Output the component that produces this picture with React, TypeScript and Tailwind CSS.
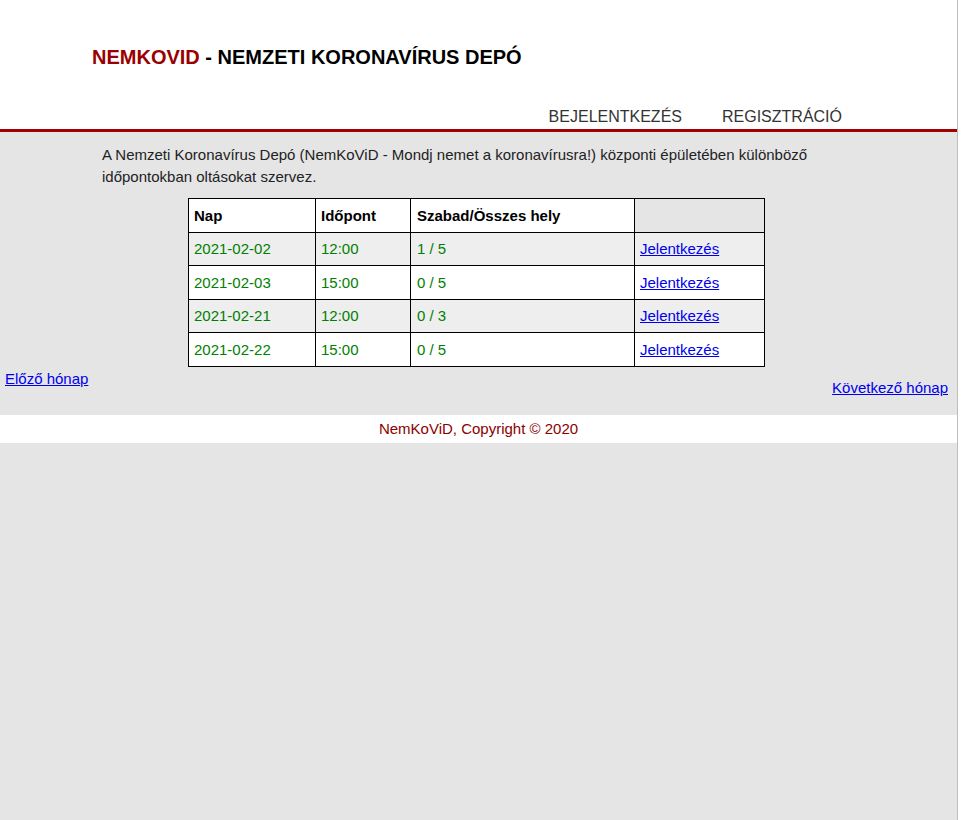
const rows = [
  { day: "2021-02-02", time: "12:00", free: "1 / 5" },
  { day: "2021-02-03", time: "15:00", free: "0 / 5" },
  { day: "2021-02-21", time: "12:00", free: "0 / 3" },
  { day: "2021-02-22", time: "15:00", free: "0 / 5" },
]

export default function App() {
  return (
    <div className="flex min-h-[820px] bg-white font-['Liberation_Sans',Arial,sans-serif]">
      <div className="w-[958px] border-r border-[#bdbdbd] bg-[#e5e5e5]">
        <header className="border-b-[3px] border-[#a00000] bg-white">
          <div className="ml-[92px] w-[770px]">
            <h1 className="pt-[44px] text-[20px] font-bold leading-[26px] text-black">
              <span className="text-[#990000]">NEMKOVID</span> - NEMZETI KORONAVÍRUS DEPÓ
            </h1>
            <nav className="mt-[36px] flex justify-end pb-[1px] text-[16px] leading-[22px] text-[#333]">
              <a className="px-[20px]">BEJELENTKEZÉS</a>
              <a className="px-[20px]">REGISZTRÁCIÓ</a>
            </nav>
          </div>
        </header>

        <main className="pb-[6px]">
          <div className="ml-[92px] w-[770px] px-[10px] pt-[12px]">
            <p className="text-[15px] leading-[22px] text-[#222]">
              A Nemzeti Koronavírus Depó (NemKoViD - Mondj nemet a koronavírusra!) központi épületében különböző
              időpontokban oltásokat szervez.
            </p>
            <table className="ml-[86px] mt-[10px] w-[577px] border-collapse text-[15px] leading-[20px]">
              <thead>
                <tr className="h-[34px]">
                  <th className="w-[127px] border border-black bg-white px-[5px] text-left font-bold">Nap</th>
                  <th className="w-[95px] border border-black bg-white px-[5px] text-left font-bold">Időpont</th>
                  <th className="w-[224px] border border-black bg-white px-[6px] text-left font-bold">Szabad/Összes hely</th>
                  <th className="border border-black"></th>
                </tr>
              </thead>
              <tbody>
                {rows.map((r, i) => (
                  <tr key={r.day} className={i % 2 === 0 ? "h-[33px] bg-[#eeeeee]" : "h-[34px] bg-white"}>
                    <td className="border border-black px-[5px] text-[#008000]">{r.day}</td>
                    <td className="border border-black px-[5px] text-[#008000]">{r.time}</td>
                    <td className="border border-black px-[6px] text-[#008000]">{r.free}</td>
                    <td className="border border-black px-[5px]">
                      <a href="#" className="text-[#0000ee] underline">Jelentkezés</a>
                    </td>
                  </tr>
                ))}
              </tbody>
            </table>
          </div>
          <div className="flex items-start justify-between pl-[5px] pr-[9px] text-[15px] leading-[20px]">
            <a href="#" className="mt-[2px] text-[#0000ee] underline">Előző hónap</a>
            <a href="#" className="mt-[11px] text-[#0000ee] underline">Következő hónap</a>
          </div>
        </main>

        <footer className="mt-[11px] bg-white py-[4px] text-center text-[15px] leading-[20px] text-[#8b0000]">
          NemKoViD, Copyright © 2020
        </footer>
      </div>
    </div>
  )
}
